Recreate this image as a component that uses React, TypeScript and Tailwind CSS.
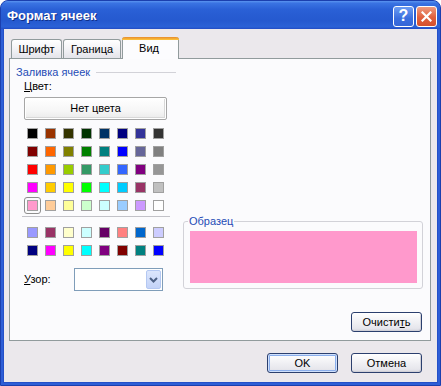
import React from 'react'

const FONT = "font-['Liberation_Sans',Arial,sans-serif]"

const MAIN: string[][] = [
  ['bg-[#000000]', 'bg-[#993300]', 'bg-[#333300]', 'bg-[#003300]', 'bg-[#003366]', 'bg-[#000080]', 'bg-[#333399]', 'bg-[#333333]'],
  ['bg-[#800000]', 'bg-[#FF6600]', 'bg-[#808000]', 'bg-[#008000]', 'bg-[#008080]', 'bg-[#0000FF]', 'bg-[#666699]', 'bg-[#808080]'],
  ['bg-[#FF0000]', 'bg-[#FF9900]', 'bg-[#99CC00]', 'bg-[#339966]', 'bg-[#33CCCC]', 'bg-[#3366FF]', 'bg-[#800080]', 'bg-[#969696]'],
  ['bg-[#FF00FF]', 'bg-[#FFCC00]', 'bg-[#FFFF00]', 'bg-[#00FF00]', 'bg-[#00FFFF]', 'bg-[#00CCFF]', 'bg-[#993366]', 'bg-[#C0C0C0]'],
  ['bg-[#FF99CC]', 'bg-[#FFCC99]', 'bg-[#FFFF99]', 'bg-[#CCFFCC]', 'bg-[#CCFFFF]', 'bg-[#99CCFF]', 'bg-[#CC99FF]', 'bg-[#FFFFFF]'],
]

const EXTRA: string[][] = [
  ['bg-[#9999FF]', 'bg-[#993366]', 'bg-[#FFFFCC]', 'bg-[#CCFFFF]', 'bg-[#660066]', 'bg-[#FF8080]', 'bg-[#0066CC]', 'bg-[#CCCCFF]'],
  ['bg-[#000080]', 'bg-[#FF00FF]', 'bg-[#FFFF00]', 'bg-[#00FFFF]', 'bg-[#800080]', 'bg-[#800000]', 'bg-[#008080]', 'bg-[#0000FF]'],
]

function Swatch({ cls, selected }: { cls: string; selected?: boolean }) {
  return (
    <div className={`relative w-[11px] h-[11px] border border-[#A0A0A0] ${cls}`}>
      {selected && <div className="absolute -inset-[4px] rounded-[3px] border border-[#8E8E8E]" />}
    </div>
  )
}

function Palette({ rows, selected }: { rows: string[][]; selected?: string }) {
  return (
    <div className="grid grid-cols-8 gap-x-[7px] gap-y-[7px] w-max">
      {rows.flat().map((c, i) => (
        <Swatch key={i} cls={c} selected={selected === `${i}`} />
      ))}
    </div>
  )
}

function XpButton({ children, def }: { children: React.ReactNode; def?: boolean }) {
  return (
    <div
      className={`h-[20px] w-[71px] rounded-[3px] border border-[#2B3F6E] flex items-center justify-center bg-[linear-gradient(to_bottom,#FFFFFF_0%,#F3F3F6_40%,#E6E6EC_85%,#D4D4DC_100%)] ${
        def
          ? 'shadow-[inset_0_0_0_1px_#CFE0FC,inset_0_0_0_2px_#8AAEEC]'
          : 'shadow-[inset_0_1px_0_#FFFFFF,inset_-1px_-1px_0_#D0D0D8]'
      }`}
    >
      {children}
    </div>
  )
}

function TitleBar() {
  return (
    <div className="h-[28px] flex items-center pl-[6px] pr-[3px] bg-[linear-gradient(to_bottom,#5A94F0_0%,#3A73E2_8%,#2A60D6_30%,#2559CF_70%,#2B61D6_92%,#1E50C6_100%)]">
      <span className="flex-1 text-white font-bold text-[13px] leading-[16px] mt-[2px] [text-shadow:1px_1px_0_#0F2F8A]">
        Формат ячеек
      </span>
      <div className="flex gap-[2px] mt-[2px]">
        <div className="w-[21px] h-[21px] rounded-[3px] border border-white flex items-center justify-center bg-[linear-gradient(to_bottom,#6C9CF2,#3A6EDF_60%,#3566D8)]">
          <span className="text-white font-bold text-[16px] leading-[16px]">?</span>
        </div>
        <div className="w-[21px] h-[21px] rounded-[3px] border border-white flex items-center justify-center bg-[linear-gradient(to_bottom,#EE9A7E,#E0603E_55%,#D4502E)]">
          <svg width="11" height="11" viewBox="0 0 11 11">
            <path d="M1.5 1.5 L9.5 9.5 M9.5 1.5 L1.5 9.5" stroke="white" strokeWidth="2.2" strokeLinecap="square" />
          </svg>
        </div>
      </div>
    </div>
  )
}

function Tab({ label, active, w }: { label: string; active?: boolean; w: string }) {
  if (active) {
    return (
      <div className={`relative z-10 -mb-px h-[22px] ${w} rounded-t-[3px] border-x border-[#919B9C] bg-[#FCFCFE] flex flex-col`}>
        <div className="h-[3px] -mx-px rounded-t-[3px] bg-[linear-gradient(to_bottom,#E68B2C,#FFC73C)]" />
        <div className="flex-1 flex items-center justify-center pb-[2px] -ml-[3px]">{label}</div>
      </div>
    )
  }
  return (
    <div className={`h-[19px] ${w} rounded-t-[3px] border border-b-0 border-[#919B9C] flex items-center justify-center bg-[linear-gradient(to_bottom,#FFFFFF,#F3F3F6_50%,#E4E4EA)]`}>
      {label}
    </div>
  )
}

export default function App() {
  return (
    <div className={`w-[441px] h-[386px] bg-white ${FONT} text-[11px] leading-[13px] text-black`}>
      <div className="flex flex-col w-[441px] h-[386px] rounded-t-[8px] border border-[#1B3FAE] bg-[#2E5ED6] overflow-hidden">
        <TitleBar />
        <div className="flex-1 mx-[3px] mb-[3px] bg-[#EBE8EC] flex flex-col shadow-[0_0_0_1px_#2450C8]">
          {/* tabs */}
          <div className="h-[29px] flex items-end pl-[7px] gap-[1px]">
            <Tab label="Шрифт" w="w-[51px]" />
            <Tab label="Граница" w="w-[58px]" />
            <Tab label="Вид" w="w-[57px]" active />
          </div>

          {/* tab panel */}
          <div className="ml-[5px] w-[422px] h-[283px] border border-[#919B9C] bg-[#FBFBFD] flex flex-col">
            <div className="mt-[7px] pl-[6px] flex items-center w-[166px]">
              <span className="text-[#1F4CB6]">Заливка ячеек</span>
              <div className="flex-1 h-px ml-[6px] bg-[#D2D2D8]" />
            </div>

            <div className="flex pl-[14px] mt-px">
              <div className="flex flex-col w-[143px]">
                <span>
                  <span className="underline">Ц</span>вет:
                </span>
                <div className="mt-[4px] h-[23px] w-[143px] rounded-[2px] border border-[#A6A6A6] flex items-center justify-center bg-[linear-gradient(to_bottom,#FFFFFF,#F6F6F6_60%,#EAEAEA)] shadow-[inset_0_0_0_1px_#FFFFFF,inset_-1px_-1px_0_1px_#D8D8D8]">
                  Нет цвета
                </div>
                <div className="mt-[8px] ml-[3px]">
                  <Palette rows={MAIN} selected="32" />
                </div>
                <div className="mt-[5px] -ml-[2px] w-[148px] h-px bg-[#C2C2C8]" />
                <div className="mt-[10px] ml-[3px]">
                  <Palette rows={EXTRA} />
                </div>
                <div className="mt-[12px] h-[23px] flex items-center">
                  <span className="w-[50px]">
                    <span className="underline">У</span>зор:
                  </span>
                  <div className="h-[23px] w-[89px] border border-[#7F9DB9] bg-white flex justify-end p-px">
                    <div className="w-[15px] h-full rounded-[2px] border border-[#B4C8F2] flex items-center justify-center bg-[linear-gradient(to_bottom,#DCE6FC,#C3D3F8)]">
                      <svg width="9" height="6" viewBox="0 0 9 6">
                        <path d="M1 1 L4.5 4.5 L8 1" stroke="#4D6185" strokeWidth="2" fill="none" />
                      </svg>
                    </div>
                  </div>
                </div>
              </div>

              <div className="ml-[16px] pt-[135px] w-[240px]">
                <fieldset className="border border-[#D2D2D8] rounded-[3px] pl-[6px] pr-[5px] pb-[5px]">
                  <legend className="text-[#1F4CB6] px-px -ml-[2px]">Образец</legend>
                  <div className="mt-[3px] h-[52px] bg-[#FF99CC]" />
                </fieldset>
              </div>
            </div>

            <div className="mt-auto mb-[8px] pr-[8px] flex justify-end">
              <XpButton>
                <span>
                  Очисти<span className="underline">т</span>ь
                </span>
              </XpButton>
            </div>
          </div>

          {/* dialog buttons */}
          <div className="mt-[12px] pr-[15px] flex justify-end gap-[13px]">
            <XpButton def>OK</XpButton>
            <XpButton>Отмена</XpButton>
          </div>
        </div>
      </div>
    </div>
  )
}
